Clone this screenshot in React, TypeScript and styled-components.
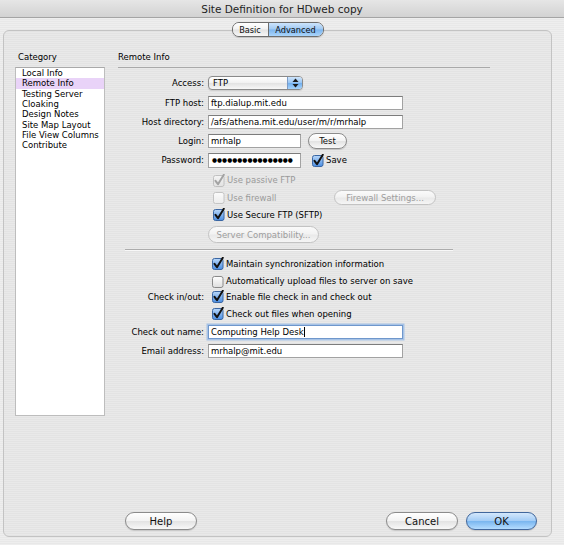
import React from 'react'
import styled, { createGlobalStyle, css } from 'styled-components'

const GlobalStyle = createGlobalStyle`
  html, body {
    margin: 0;
    padding: 0;
    background: #ececec;
  }
  * {
    box-sizing: border-box;
  }
`

const stripes = css`
  background-color: #ebebeb;
  background-image: repeating-linear-gradient(
    to bottom,
    #eeeeee 0px,
    #eeeeee 1px,
    #e8e8e8 1px,
    #e8e8e8 2px
  );
`

const Window = styled.div`
  width: 564px;
  height: 545px;
  display: flex;
  flex-direction: column;
  font-family: 'DejaVu Sans', Verdana, sans-serif;
  font-size: 8.5px;
  color: #000;
  ${stripes};
  overflow: hidden;
`

const TitleBar = styled.div`
  height: 18px;
  display: flex;
  align-items: center;
  justify-content: center;
  font-size: 10.5px;
  color: #1e1e1e;
  background: linear-gradient(#e6e6e6, #d2d2d2);
  border-bottom: 1px solid #a4a4a4;
`

const TabWrap = styled.div`
  display: flex;
  justify-content: center;
  margin: 4px 12px -7px 3px;
  position: relative;
  z-index: 1;
`

const Segmented = styled.div`
  display: flex;
  height: 15px;
  border: 1px solid #6d6d6d;
  border-radius: 7px;
  overflow: hidden;
  box-shadow: 0 1px 1px rgba(0, 0, 0, 0.15);
`

const Segment = styled.div<{ $active?: boolean; $w: number }>`
  width: ${(p) => p.$w}px;
  display: flex;
  align-items: center;
  justify-content: center;
  font-size: 8.2px;
  color: #111;
  background: ${(p) =>
    p.$active
      ? 'linear-gradient(#cde4fb 0%, #9fc9f3 48%, #7db5ee 52%, #aad5fb 100%)'
      : 'linear-gradient(#ffffff 0%, #f2f2f2 48%, #e2e2e2 52%, #f7f7f7 100%)'};
  & + & {
    border-left: 1px solid #6d6d6d;
  }
`

const Panel = styled.div`
  flex: 1;
  margin: 0 12px 8px 3px;
  border: 1px solid #c3c3c3;
  border-radius: 6px;
  padding: 21px 14px 6px 11px;
  display: flex;
  flex-direction: column;
  background-color: rgba(0, 0, 0, 0.018);
`

const Content = styled.div`
  display: flex;
  gap: 13px;
`

const Sidebar = styled.div`
  width: 90px;
  display: flex;
  flex-direction: column;
  gap: 4px;
`

const SectionLabel = styled.div<{ $indent?: number }>`
  height: 11px;
  line-height: 11px;
  padding-left: ${(p) => p.$indent ?? 0}px;
`

const ListBox = styled.div`
  height: 349px;
  background: #fff;
  border: 1px solid #bdbdbd;
  border-top-color: #a9a9a9;
`

const ListItem = styled.div<{ $selected?: boolean }>`
  height: 10.33px;
  line-height: 10.33px;
  padding-left: 6px;
  white-space: nowrap;
  background: ${(p) => (p.$selected ? '#e9d3f8' : 'transparent')};
`

const Main = styled.div`
  width: 372px;
  display: flex;
  flex-direction: column;
`

const HeaderRule = styled.div`
  height: 1px;
  margin: 4px 0 5px;
  background: #a9a9a9;
`

const Row = styled.div<{ $h: number }>`
  height: ${(p) => p.$h}px;
  display: grid;
  grid-template-columns: 87px 1fr;
  column-gap: 3px;
  align-items: center;
`

const FieldLabel = styled.div`
  text-align: right;
  padding-right: 1px;
  white-space: nowrap;
`

const Controls = styled.div`
  display: flex;
  align-items: center;
`

const TextField = styled.div<{ $w: number; $h?: number; $focused?: boolean }>`
  width: ${(p) => p.$w}px;
  height: ${(p) => p.$h ?? 14}px;
  background: #fff;
  border: 1px solid #a2a2a2;
  border-top-color: #7c7c7c;
  padding-left: 2px;
  display: flex;
  align-items: center;
  white-space: nowrap;
  overflow: hidden;
  ${(p) =>
    p.$focused &&
    css`
      border-color: #6f97cc;
      box-shadow: 0 0 0 1.5px #a7c3e6;
    `}
`

const Caret = styled.span`
  display: inline-block;
  width: 1px;
  height: 10px;
  background: #000;
`

const Dots = styled.span`
  font-size: 5.8px;
  letter-spacing: 0px;
  padding-left: 1px;
`

const Popup = styled.div`
  width: 95px;
  height: 14px;
  display: flex;
  border: 1px solid #8a8a8a;
  border-radius: 4px;
  overflow: hidden;
  background: linear-gradient(#ffffff, #f0f0f0 50%, #e2e2e2 52%, #f7f7f7);
  box-shadow: 0 1px 1px rgba(0, 0, 0, 0.12);
`

const PopupText = styled.div`
  flex: 1;
  padding-left: 4px;
  display: flex;
  align-items: center;
`

const PopupArrow = styled.div`
  width: 15px;
  display: flex;
  align-items: center;
  justify-content: center;
  border-left: 1px solid #7b9bc6;
  background: linear-gradient(#cfe5fb, #96c4f3 50%, #72afee 52%, #a6d3fb);
`

const PillButton = styled.div<{ $w: number; $h: number; $disabled?: boolean; $default?: boolean; $big?: boolean }>`
  width: ${(p) => p.$w}px;
  height: ${(p) => p.$h}px;
  border-radius: ${(p) => p.$h / 2}px;
  display: flex;
  align-items: center;
  justify-content: center;
  white-space: nowrap;
  font-size: ${(p) => (p.$big ? 10 : 8.5)}px;
  border: 1px solid ${(p) => (p.$disabled ? '#c3c3c3' : p.$default ? '#41679c' : '#8b8b8b')};
  color: ${(p) => (p.$disabled ? '#9d9d9d' : '#111')};
  background: ${(p) =>
    p.$default
      ? 'linear-gradient(#d4e8fc 0%, #a4cdf6 48%, #7ab6ef 52%, #b4dcff 100%)'
      : p.$disabled
      ? 'linear-gradient(#fafafa 0%, #f2f2f2 48%, #e9e9e9 52%, #f5f5f5 100%)'
      : 'linear-gradient(#ffffff 0%, #f3f3f3 48%, #e3e3e3 52%, #f8f8f8 100%)'};
  box-shadow: ${(p) => (p.$disabled ? 'none' : '0 1px 1px rgba(0,0,0,0.15)')};
`

const CheckItem = styled.div<{ $disabled?: boolean; $w?: number }>`
  display: flex;
  align-items: center;
  gap: 2px;
  white-space: nowrap;
  color: ${(p) => (p.$disabled ? '#9a9a9a' : '#000')};
  width: ${(p) => (p.$w ? `${p.$w}px` : 'auto')};
`

const Gap = styled.div<{ $w: number }>`
  width: ${(p) => p.$w}px;
  flex-shrink: 0;
`

const Separator = styled.div`
  height: 1px;
  margin: 4px 37px 4px 7px;
  background: #acacac;
  box-shadow: 0 1px 0 #f8f8f8;
`

const Footer = styled.div`
  margin-top: auto;
  display: flex;
  align-items: center;
  gap: 8px;
  padding-left: 110px;
`

const Spacer = styled.div`
  flex: 1;
`

type BoxState = 'on' | 'off'

function CheckBox({ state, disabled }: { state: BoxState; disabled?: boolean }) {
  const id = `cb-${state}-${disabled ? 'd' : 'e'}`
  const on = state === 'on'
  let top = '#ffffff'
  let bottom = '#dedede'
  let stroke = disabled ? '#c4c4c4' : '#8a8a8a'
  if (on && !disabled) {
    top = '#b9d8fa'
    bottom = '#4a8de2'
    stroke = '#3a66a3'
  }
  if (on && disabled) {
    top = '#f4f4f4'
    bottom = '#e2e2e2'
    stroke = '#c0c0c0'
  }
  if (!on && disabled) {
    top = '#fbfbfb'
    bottom = '#ececec'
  }
  return (
    <svg width="12" height="13" viewBox="0 0 12 13">
      <defs>
        <linearGradient id={id} x1="0" y1="0" x2="0" y2="1">
          <stop offset="0" stopColor={top} />
          <stop offset="1" stopColor={bottom} />
        </linearGradient>
      </defs>
      <rect x="0.5" y="1.5" width="10.5" height="11" rx="2" fill={`url(#${id})`} stroke={stroke} />
      {on && (
        <path
          d="M2.5 6.8 L5 10.2 L10.8 0.8"
          fill="none"
          stroke={disabled ? '#a3a3a3' : '#111'}
          strokeWidth="2"
          strokeLinecap="round"
          strokeLinejoin="round"
        />
      )}
    </svg>
  )
}

function Check({
  label,
  state,
  disabled,
  w,
  offset = 2,
}: {
  label: string
  state: BoxState
  disabled?: boolean
  w?: number
  offset?: number
}) {
  return (
    <CheckItem $disabled={disabled} $w={w}>
      <Gap $w={offset} />
      <CheckBox state={state} disabled={disabled} />
      <span>{label}</span>
    </CheckItem>
  )
}

const categories = [
  'Local Info',
  'Remote Info',
  'Testing Server',
  'Cloaking',
  'Design Notes',
  'Site Map Layout',
  'File View Columns',
  'Contribute',
]

export default function App() {
  return (
    <>
      <GlobalStyle />
      <Window>
        <TitleBar>Site Definition for HDweb copy</TitleBar>
        <TabWrap>
          <Segmented>
            <Segment $w={35}>Basic</Segment>
            <Segment $w={55} $active>
              Advanced
            </Segment>
          </Segmented>
        </TabWrap>
        <Panel>
          <Content>
            <Sidebar>
              <SectionLabel $indent={3}>Category</SectionLabel>
              <ListBox>
                {categories.map((c) => (
                  <ListItem key={c} $selected={c === 'Remote Info'}>
                    {c}
                  </ListItem>
                ))}
              </ListBox>
            </Sidebar>
            <Main>
              <SectionLabel>Remote Info</SectionLabel>
              <HeaderRule />

              <Row $h={20}>
                <FieldLabel>Access:</FieldLabel>
                <Controls>
                  <Popup>
                    <PopupText>FTP</PopupText>
                    <PopupArrow>
                      <svg width="7" height="10" viewBox="0 0 7 10">
                        <path d="M3.5 0.5 L6.5 4 L0.5 4 Z" fill="#1a1a1a" />
                        <path d="M3.5 9.5 L6.5 6 L0.5 6 Z" fill="#1a1a1a" />
                      </svg>
                    </PopupArrow>
                  </Popup>
                </Controls>
              </Row>
              <Row $h={19}>
                <FieldLabel>FTP host:</FieldLabel>
                <Controls>
                  <TextField $w={195}>ftp.dialup.mit.edu</TextField>
                </Controls>
              </Row>
              <Row $h={19}>
                <FieldLabel>Host directory:</FieldLabel>
                <Controls>
                  <TextField $w={195}>/afs/athena.mit.edu/user/m/r/mrhalp</TextField>
                </Controls>
              </Row>
              <Row $h={19}>
                <FieldLabel>Login:</FieldLabel>
                <Controls>
                  <TextField $w={93}>mrhalp</TextField>
                  <Gap $w={7} />
                  <PillButton $w={39} $h={16}>
                    Test
                  </PillButton>
                </Controls>
              </Row>
              <Row $h={20}>
                <FieldLabel>Password:</FieldLabel>
                <Controls>
                  <TextField $w={93} $h={15}>
                    <Dots>{'\u25CF'.repeat(16)}</Dots>
                  </TextField>
                  <Gap $w={7} />
                  <Check label="Save" state="on" />
                </Controls>
              </Row>
              <Row $h={20}>
                <span />
                <Controls>
                  <Check label="Use passive FTP" state="on" disabled offset={3} />
                </Controls>
              </Row>
              <Row $h={15}>
                <span />
                <Controls>
                  <Check label="Use firewall" state="off" disabled offset={3} w={126} />
                  <PillButton $w={102} $h={15} $disabled>
                    Firewall Settings...
                  </PillButton>
                </Controls>
              </Row>
              <Row $h={19}>
                <span />
                <Controls>
                  <Check label="Use Secure FTP (SFTP)" state="on" offset={3} />
                </Controls>
              </Row>
              <Row $h={21}>
                <span />
                <Controls>
                  <PillButton $w={111} $h={17} $disabled>
                    Server Compatibility...
                  </PillButton>
                </Controls>
              </Row>

              <Separator />

              <Row $h={19}>
                <span />
                <Check label="Maintain synchronization information" state="on" />
              </Row>
              <Row $h={16}>
                <span />
                <Check label="Automatically upload files to server on save" state="off" />
              </Row>
              <Row $h={15}>
                <FieldLabel>Check in/out:</FieldLabel>
                <Check label="Enable file check in and check out" state="on" />
              </Row>
              <Row $h={19}>
                <span />
                <Check label="Check out files when opening" state="on" />
              </Row>
              <Row $h={18}>
                <FieldLabel>Check out name:</FieldLabel>
                <Controls>
                  <TextField $w={195} $focused>
                    Computing Help Desk
                    <Caret />
                  </TextField>
                </Controls>
              </Row>
              <Row $h={19}>
                <FieldLabel>Email address:</FieldLabel>
                <Controls>
                  <TextField $w={195}>mrhalp@mit.edu</TextField>
                </Controls>
              </Row>
            </Main>
          </Content>
          <Footer>
            <PillButton $w={72} $h={18} $big>
              Help
            </PillButton>
            <Spacer />
            <PillButton $w={72} $h={18} $big>
              Cancel
            </PillButton>
            <PillButton $w={71} $h={18} $big $default>
              OK
            </PillButton>
          </Footer>
        </Panel>
      </Window>
    </>
  )
}
